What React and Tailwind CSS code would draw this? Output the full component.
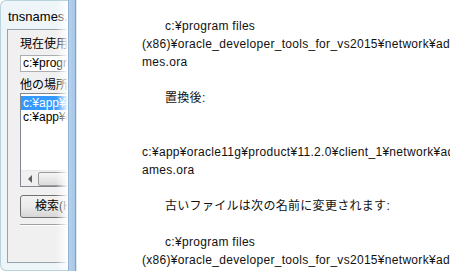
import React from "react";

const font = { fontFamily: '"Liberation Sans", "Noto Sans CJK JP", sans-serif' };

const lines = [
  { text: "c:¥program files", indent: true },
  { text: "(x86)¥oracle_developer_tools_for_vs2015¥network¥admin¥tnsna" },
  { text: "mes.ora" },
  { text: "" },
  { text: "置換後:", indent: true },
  { text: "" },
  { text: "" },
  { text: "c:¥app¥oracle11g¥product¥11.2.0¥client_1¥network¥admin¥tnsn" },
  { text: "ames.ora" },
  { text: "" },
  { text: "古いファイルは次の名前に変更されます:", indent: true },
  { text: "" },
  { text: "c:¥program files", indent: true },
  { text: "(x86)¥oracle_developer_tools_for_vs2015¥network¥admin¥tnsna" },
];

function Dialog() {
  return (
    <div className="relative w-[68px] shrink-0 overflow-hidden rounded-tl-[6px] rounded-bl-[6px] bg-[#eef5f8] border-l border-t border-b border-[#b9d3dc]">
      <div className="w-[320px]">
        {/* title */}
        <div className="h-[28px] pl-[7px] pt-[8px] text-[13px] leading-[16px] text-black" style={font}>
          tnsnames.ora の置換
        </div>

        {/* client area */}
        <div className="ml-[6px] h-[234px] border border-[#98a2aa] bg-[#f0f0f0] pl-[12px] pt-[7px] text-[12px] text-black" style={font}>
          <div className="h-[15px] leading-[15px]">現在使用中のファイル:</div>
          <div className="mt-[3px] h-[17px] w-[280px] border border-[#abadb3] bg-white pl-[2px] leading-[15px]">
            c:¥program files (x86)¥oracle
          </div>
          <div className="mt-[6px] h-[15px] leading-[15px]">他の場所から置換するファイル:</div>
          <div className="h-[94px] w-[280px] border border-[#828790] bg-white flex flex-col">
            <div className="pt-[2px] flex-1">
              <div className="h-[14px] bg-[#3399ff] pl-[2px] leading-[14px] text-white">c:¥app¥oracle11g¥product</div>
              <div className="h-[14px] pl-[2px] leading-[14px]">c:¥app¥oracle11g¥product</div>
            </div>
            <div className="flex h-[16px] items-center bg-[#f0f0f0] border-t border-[#e8e8e8]">
              <div className="flex w-[17px] items-center justify-center">
                <div className="h-0 w-0 border-y-[4px] border-r-[4px] border-y-transparent border-r-[#606060]" />
              </div>
              <div className="h-[14px] flex-1 rounded-[2px] border border-[#9a9a9a] bg-gradient-to-b from-[#f6f6f6] to-[#dcdcdc]" />
            </div>
          </div>
          <div className="mt-[8px] flex h-[23px] w-[120px] items-center rounded-[3px] border border-[#707070] bg-gradient-to-b from-[#f2f2f2] via-[#ebebeb] to-[#d6d6d6] pl-[14px] leading-[15px]">
            検索(H)...
          </div>
          <div className="mt-[6px] h-[2px] w-[280px] border-t border-[#a0a0a0] border-b border-b-white" />
        </div>
      </div>
      {/* glow cast by the front window */}
      <div className="pointer-events-none absolute right-0 top-0 h-full w-[12px] bg-gradient-to-r from-white/0 to-white" />
    </div>
  );
}

export default function App() {
  return (
    <div className="flex h-[271px] w-[450px] overflow-hidden bg-white">
      <Dialog />
      <div className="flex w-[9px] shrink-0">
        <div className="w-[1px] bg-[#8fb3d6]" />
        <div className="w-[6px] bg-gradient-to-r from-[#b6d1ec] to-[#a7c6e6]" />
        <div className="w-[1px] bg-[#7fa4c9]" />
        <div className="w-[1px] bg-[#dbe6f1]" />
      </div>
      <div className="flex-1 overflow-hidden bg-white pl-[65px] pt-[17px] text-[12px] leading-[18px] tracking-[0.3px] text-[#111]" style={font}>
        {lines.map((l, i) => (
          <div key={i} className={"h-[18px] whitespace-nowrap " + (l.indent ? "pl-[23px]" : "")}>
            {l.text}
          </div>
        ))}
      </div>
    </div>
  );
}
